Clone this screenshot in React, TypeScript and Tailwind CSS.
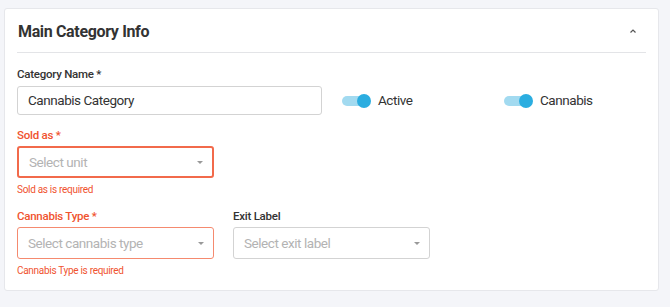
const Toggle = ({ label }: { label: string }) => (
  <div className="flex items-center gap-[7px]">
    <div className="relative w-[29px] h-[14px] flex items-center">
      <div className="w-[26px] h-[10px] rounded-full bg-[#a2daf0]" />
      <div className="absolute right-0 w-[14px] h-[14px] rounded-full bg-[#2bade0]" />
    </div>
    <span className="text-[13.5px] tracking-[-0.45px] text-[#333]">{label}</span>
  </div>
);

const Caret = () => (
  <span className="w-0 h-0 border-l-[3px] border-r-[3px] border-t-[3px] border-l-transparent border-r-transparent border-t-[#999]" />
);

const SelectBox = ({
  placeholder,
  error,
  focused,
}: {
  placeholder: string;
  error?: boolean;
  focused?: boolean;
}) => (
  <div
    className={`w-[197px] h-[32px] rounded-[3px] flex items-center justify-between pl-[10px] pr-[9px] bg-white ${
      error
        ? focused
          ? "border-2 border-[#f26a4b]"
          : "border border-[#f58a6f]"
        : "border border-[#d3d3d3]"
    }`}
  >
    <span className="text-[13.5px] tracking-[-0.45px] text-[#b3b3b3]">{placeholder}</span>
    <Caret />
  </div>
);

export default function App() {
  return (
    <div
      className="min-h-screen bg-[#f4f5f9] pt-[8px] pl-[4px] pr-[11px]"
      style={{ fontFamily: "Roboto, 'Liberation Sans', sans-serif" }}
    >
      <div className="bg-white border border-[#e6e7eb] rounded-[3px] px-[12px] pb-[12px]">
        <div className="h-[44px] flex items-center justify-between border-b border-[#e3e4e7]">
          <h2 className="text-[16px] tracking-[-0.35px] font-bold text-[#333] pl-[1px] pt-[2px]">
            Main Category Info
          </h2>
          <svg width="8" height="6" viewBox="0 0 8 6" className="mr-[9px]">
            <path d="M1.5 4.5 L4 2 L6.5 4.5" stroke="#555" strokeWidth="1.2" fill="none" />
          </svg>
        </div>

        <div className="pt-[13px]">
          <label className="block text-[11.5px] tracking-[-0.25px] leading-[16px] font-medium text-[#333]">
            Category Name *
          </label>
          <div className="flex items-center mt-[4px]">
            <div className="w-[305px] h-[29px] border border-[#d3d3d3] rounded-[3px] flex items-center pl-[10px] text-[13.5px] tracking-[-0.45px] text-[#333]">
              Cannabis Category
            </div>
            <div className="ml-[20px] w-[162px]">
              <Toggle label="Active" />
            </div>
            <Toggle label="Cannabis" />
          </div>
        </div>

        <div className="mt-[12px]">
          <label className="block text-[11.5px] tracking-[-0.25px] leading-[16px] font-medium text-[#f0532f]">
            Sold as *
          </label>
          <div className="mt-[3px]">
            <SelectBox placeholder="Select unit" error focused />
          </div>
          <p className="text-[10px] tracking-[-0.3px] leading-[14px] mt-[5px] text-[#f0532f]">
            Sold as is required
          </p>
        </div>

        <div className="mt-[11px] flex gap-[19px]">
          <div>
            <label className="block text-[11.5px] tracking-[-0.25px] leading-[16px] font-medium text-[#f0532f]">
              Cannabis Type *
            </label>
            <div className="mt-[3px]">
              <SelectBox placeholder="Select cannabis type" error />
            </div>
            <p className="text-[10px] tracking-[-0.3px] leading-[14px] mt-[5px] text-[#f0532f]">
              Cannabis Type is required
            </p>
          </div>
          <div>
            <label className="block text-[11.5px] tracking-[-0.25px] leading-[16px] font-medium text-[#333]">
              Exit Label
            </label>
            <div className="mt-[3px]">
              <SelectBox placeholder="Select exit label" />
            </div>
          </div>
        </div>
      </div>
    </div>
  );
}
